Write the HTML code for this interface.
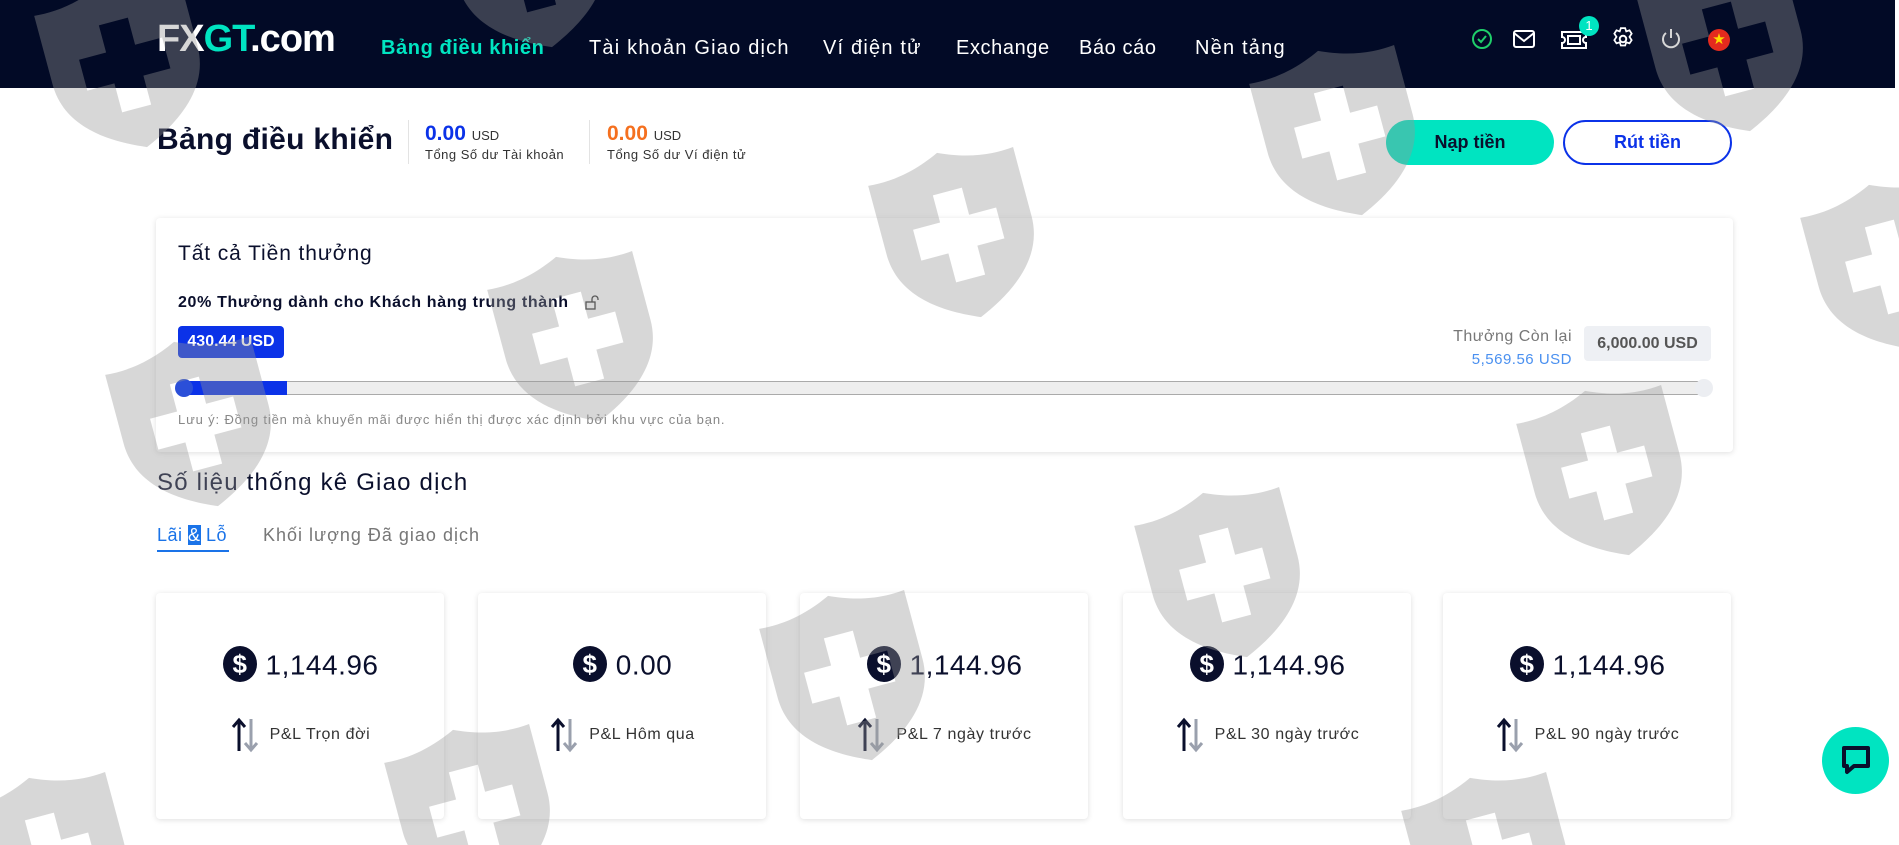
<!DOCTYPE html>
<html><head><meta charset="utf-8"><style>
*{margin:0;padding:0;box-sizing:border-box}
html,body{width:1899px;height:845px;overflow:hidden}
body{background:#fff;font-family:"Liberation Sans","DejaVu Sans",sans-serif;position:relative;color:#0a0f2c}
.a{position:absolute;white-space:nowrap}
.hdr{position:absolute;left:0;top:0;width:1895px;height:88px;background:#020a26}
.nav{font-size:20px;color:#fff;top:37px;letter-spacing:1.2px}
.card{position:absolute;background:#fff;border-radius:4px;box-shadow:0 1px 6px rgba(0,0,0,.13)}
.pc{top:593px;width:288px;height:226px}
.val{position:absolute;top:55px;left:0;width:100%;text-align:center;font-size:28px;color:#0a0f2c;letter-spacing:0.5px}
.val svg{vertical-align:middle;margin-right:8px;position:relative;top:-3px}
.lab{position:absolute;top:124px;left:0;width:100%;text-align:center;font-size:16px;color:#333;letter-spacing:0.6px}
.lab svg{vertical-align:middle;margin-right:10px}
</style></head><body>
<div class="hdr"></div>
<div class="a" style="left:157px;top:18px;font-size:38px;font-weight:bold;color:#fff;letter-spacing:-1px">FX<span style="color:#00e4c1">GT</span>.com</div>
<div class="a nav" style="left:381px;color:#00e4c1;font-weight:bold;letter-spacing:0.6px">Bảng điều khiển</div>
<div class="a nav" style="left:589px">Tài khoản Giao dịch</div>
<div class="a nav" style="left:823px">Ví điện tử</div>
<div class="a nav" style="left:956px;letter-spacing:0.6px">Exchange</div>
<div class="a nav" style="left:1079px;letter-spacing:0.6px">Báo cáo</div>
<div class="a nav" style="left:1195px">Nền tảng</div>
<svg class="a" style="left:1470px;top:27px" width="24" height="24" viewBox="0 0 24 24"><circle cx="12" cy="12" r="9" fill="none" stroke="#1fcf6a" stroke-width="2"/><path d="M8 12l3 3 5-6" fill="none" stroke="#1fcf6a" stroke-width="2"/></svg>
<svg class="a" style="left:1512px;top:29px" width="24" height="20" viewBox="0 0 24 20"><rect x="2" y="2" width="20" height="16" rx="2" fill="none" stroke="#fff" stroke-width="2"/><path d="M2 4l10 8 10-8" fill="none" stroke="#fff" stroke-width="2"/></svg>
<svg class="a" style="left:1560px;top:30px" width="28" height="20" viewBox="0 0 28 20"><path d="M2 2h24v5a3 3 0 0 0 0 6v5H2v-5a3 3 0 0 0 0-6z" fill="none" stroke="#fff" stroke-width="2"/><rect x="8" y="6" width="12" height="8" fill="none" stroke="#fff" stroke-width="2"/></svg>
<div class="a" style="left:1579px;top:16px;width:20px;height:20px;border-radius:50%;background:#00e4c1;color:#fff;font-size:13px;text-align:center;line-height:20px">1</div>
<svg class="a" style="left:1610px;top:26px" width="26" height="26" viewBox="0 0 24 24"><circle cx="12" cy="12" r="3" fill="none" stroke="#fff" stroke-width="1.8"/><path d="M10 2h4l1 3 3-1 2 3-2 3 2 3-2 3-3-1-1 3h-4l-1-3-3 1-2-3 2-3-2-3 2-3 3 1z" fill="none" stroke="#fff" stroke-width="1.6"/></svg>
<svg class="a" style="left:1659px;top:27px" width="24" height="24" viewBox="0 0 24 24"><path d="M7 6a8 8 0 1 0 10 0" fill="none" stroke="#fff" stroke-width="2"/><path d="M12 2v9" stroke="#fff" stroke-width="2"/></svg>
<div class="a" style="left:1708px;top:29px;width:22px;height:22px;border-radius:50%;background:#e42a1e;color:#ffdc00;font-size:15px;text-align:center;line-height:22px">★</div>

<div class="a" style="left:157px;top:123px;font-size:30px;font-weight:bold;color:#0a0f2c;letter-spacing:0.3px">Bảng điều khiển</div>
<div class="a" style="left:408px;top:120px;width:1px;height:44px;background:#e3e3e3"></div>
<div class="a" style="left:425px;top:122px;font-size:21px;font-weight:bold;color:#0b32e8">0.00 <span style="font-size:13px;font-weight:normal;color:#333">USD</span></div>
<div class="a" style="left:425px;top:147px;font-size:13px;color:#333;letter-spacing:0.5px">Tổng Số dư Tài khoản</div>
<div class="a" style="left:589px;top:120px;width:1px;height:44px;background:#e3e3e3"></div>
<div class="a" style="left:607px;top:122px;font-size:21px;font-weight:bold;color:#f5701f">0.00 <span style="font-size:13px;font-weight:normal;color:#333">USD</span></div>
<div class="a" style="left:607px;top:147px;font-size:13px;color:#333;letter-spacing:0.5px">Tổng Số dư Ví điện tử</div>
<div class="a" style="left:1386px;top:120px;width:168px;height:45px;border-radius:23px;background:#00e4c1;color:#0a0f2c;font-size:18px;font-weight:bold;text-align:center;line-height:45px">Nạp tiền</div>
<div class="a" style="left:1563px;top:120px;width:169px;height:45px;border-radius:23px;border:2px solid #0b32e8;color:#0b32e8;font-size:18px;font-weight:bold;text-align:center;line-height:41px">Rút tiền</div>

<div class="card" style="left:156px;top:218px;width:1577px;height:234px"></div>
<div class="a" style="left:178px;top:242px;font-size:21px;color:#0a0f2c;letter-spacing:0.9px">Tất cả Tiền thưởng</div>
<div class="a" style="left:178px;top:294px;font-size:16px;font-weight:bold;color:#0a0f2c;letter-spacing:0.65px">20% Thưởng dành cho Khách hàng trung thành</div>
<svg class="a" style="left:584px;top:295px" width="16" height="16" viewBox="0 0 16 16"><rect x="2" y="7" width="9" height="7" fill="none" stroke="#333" stroke-width="1.3"/><path d="M8 7V4a3 3 0 0 1 6 0v1" fill="none" stroke="#333" stroke-width="1.3"/></svg>
<div class="a" style="left:178px;top:326px;width:106px;height:32px;background:#0b32e8;border-radius:4px;color:#fff;font-size:16px;font-weight:bold;text-align:center;line-height:32px">430.44 USD</div>
<div class="a" style="left:1350px;top:328px;width:222px;text-align:right;font-size:16px;color:#777;letter-spacing:0.5px">Thưởng Còn lại</div>
<div class="a" style="left:1350px;top:351px;width:222px;text-align:right;font-size:15px;color:#4a90f0;letter-spacing:0.5px">5,569.56 USD</div>
<div class="a" style="left:1584px;top:326px;width:127px;height:35px;background:#eef0f4;border-radius:4px;color:#555;font-size:16px;font-weight:bold;text-align:center;line-height:35px">6,000.00 USD</div>
<div class="a" style="left:184px;top:381px;width:1519px;height:14px;background:#eee;border-top:1px solid #aaa;border-bottom:1px solid #aaa"></div>
<div class="a" style="left:184px;top:381px;width:103px;height:14px;background:#0b32e8"></div>
<div class="a" style="left:175px;top:379px;width:18px;height:18px;border-radius:50%;background:#2b4fd8"></div>
<div class="a" style="left:1695px;top:379px;width:18px;height:18px;border-radius:50%;background:#eceef2"></div>
<div class="a" style="left:178px;top:412px;font-size:13px;color:#888;letter-spacing:0.85px">Lưu ý: Đồng tiền mà khuyến mãi được hiển thị được xác định bởi khu vực của bạn.</div>

<div class="a" style="left:157px;top:469px;font-size:24px;color:#0a0f2c;letter-spacing:1.2px">Số liệu thống kê Giao dịch</div>
<div class="a" style="left:157px;top:525px;font-size:18px;color:#1a73e8;letter-spacing:0.5px">Lãi <span style="background:#1a73e8;color:#fff">&amp;</span> Lỗ</div>
<div class="a" style="left:157px;top:550px;width:72px;height:2px;background:#1a73e8"></div>
<div class="a" style="left:263px;top:525px;font-size:18px;color:#777;letter-spacing:1px">Khối lượng Đã giao dịch</div>

<div class="card pc" style="left:156px"><div class="val"><svg width="36" height="38" viewBox="0 0 36 38"><ellipse cx="18" cy="19" rx="17" ry="18" fill="#0a0f2c"/><text x="18" y="28" text-anchor="middle" font-size="26" font-weight="bold" fill="#fff" font-family="Liberation Sans">$</text></svg>1,144.96</div><div class="lab"><svg width="30" height="36" viewBox="0 0 30 36"><path d="M9 34V4M3 10l6-7 6 7" fill="none" stroke="#0a0f2c" stroke-width="3"/><path d="M21 2v30M15 26l6 7 6-7" fill="none" stroke="#9aa0ad" stroke-width="3"/></svg>P&amp;L Trọn đời</div></div>
<div class="card pc" style="left:478px"><div class="val"><svg width="36" height="38" viewBox="0 0 36 38"><ellipse cx="18" cy="19" rx="17" ry="18" fill="#0a0f2c"/><text x="18" y="28" text-anchor="middle" font-size="26" font-weight="bold" fill="#fff" font-family="Liberation Sans">$</text></svg>0.00</div><div class="lab"><svg width="30" height="36" viewBox="0 0 30 36"><path d="M9 34V4M3 10l6-7 6 7" fill="none" stroke="#0a0f2c" stroke-width="3"/><path d="M21 2v30M15 26l6 7 6-7" fill="none" stroke="#9aa0ad" stroke-width="3"/></svg>P&amp;L Hôm qua</div></div>
<div class="card pc" style="left:800px"><div class="val"><svg width="36" height="38" viewBox="0 0 36 38"><ellipse cx="18" cy="19" rx="17" ry="18" fill="#0a0f2c"/><text x="18" y="28" text-anchor="middle" font-size="26" font-weight="bold" fill="#fff" font-family="Liberation Sans">$</text></svg>1,144.96</div><div class="lab"><svg width="30" height="36" viewBox="0 0 30 36"><path d="M9 34V4M3 10l6-7 6 7" fill="none" stroke="#0a0f2c" stroke-width="3"/><path d="M21 2v30M15 26l6 7 6-7" fill="none" stroke="#9aa0ad" stroke-width="3"/></svg>P&amp;L 7 ngày trước</div></div>
<div class="card pc" style="left:1123px"><div class="val"><svg width="36" height="38" viewBox="0 0 36 38"><ellipse cx="18" cy="19" rx="17" ry="18" fill="#0a0f2c"/><text x="18" y="28" text-anchor="middle" font-size="26" font-weight="bold" fill="#fff" font-family="Liberation Sans">$</text></svg>1,144.96</div><div class="lab"><svg width="30" height="36" viewBox="0 0 30 36"><path d="M9 34V4M3 10l6-7 6 7" fill="none" stroke="#0a0f2c" stroke-width="3"/><path d="M21 2v30M15 26l6 7 6-7" fill="none" stroke="#9aa0ad" stroke-width="3"/></svg>P&amp;L 30 ngày trước</div></div>
<div class="card pc" style="left:1443px"><div class="val"><svg width="36" height="38" viewBox="0 0 36 38"><ellipse cx="18" cy="19" rx="17" ry="18" fill="#0a0f2c"/><text x="18" y="28" text-anchor="middle" font-size="26" font-weight="bold" fill="#fff" font-family="Liberation Sans">$</text></svg>1,144.96</div><div class="lab"><svg width="30" height="36" viewBox="0 0 30 36"><path d="M9 34V4M3 10l6-7 6 7" fill="none" stroke="#0a0f2c" stroke-width="3"/><path d="M21 2v30M15 26l6 7 6-7" fill="none" stroke="#9aa0ad" stroke-width="3"/></svg>P&amp;L 90 ngày trước</div></div>

<svg class="a" style="left:0;top:0" width="1899" height="845" viewBox="0 0 1899 845">
<defs><g id="sh"><path fill-rule="evenodd" fill="rgba(150,150,150,0.38)" d="M75 0C105 14 130 16 150 14V85C150 130 110 155 75 170C40 155 0 130 0 85V14C20 16 45 14 75 0Z M60 40H90V68H118V100H90V130H60V100H32V68H60Z"/></g></defs>
<use href="#sh" transform="translate(50,-20) rotate(-15 75 85)"/>
<use href="#sh" transform="translate(455,-120) rotate(-15 75 85)"/>
<use href="#sh" transform="translate(884,150) rotate(-15 75 85)"/>
<use href="#sh" transform="translate(503,254) rotate(-15 75 85)"/>
<use href="#sh" transform="translate(121,339) rotate(-15 75 85)"/>
<use href="#sh" transform="translate(1265,48) rotate(-15 75 85)"/>
<use href="#sh" transform="translate(1653,-36) rotate(-15 75 85)"/>
<use href="#sh" transform="translate(1532,388) rotate(-15 75 85)"/>
<use href="#sh" transform="translate(1150,490) rotate(-15 75 85)"/>
<use href="#sh" transform="translate(775,593) rotate(-15 75 85)"/>
<use href="#sh" transform="translate(400,727) rotate(-15 75 85)"/>
<use href="#sh" transform="translate(1816,182) rotate(-15 75 85)"/>
<use href="#sh" transform="translate(-24,775) rotate(-15 75 85)"/>
<use href="#sh" transform="translate(1417,775) rotate(-15 75 85)"/>
</svg>

<div class="a" style="left:1822px;top:727px;width:67px;height:67px;border-radius:50%;background:#00e4c1"></div>
<svg class="a" style="left:1838px;top:742px" width="36" height="36" viewBox="0 0 36 36"><path d="M6 6h24v18H16l-7 6v-6H6z" fill="none" stroke="#0a0f2c" stroke-width="4" stroke-linejoin="round"/></svg>
</body></html>
